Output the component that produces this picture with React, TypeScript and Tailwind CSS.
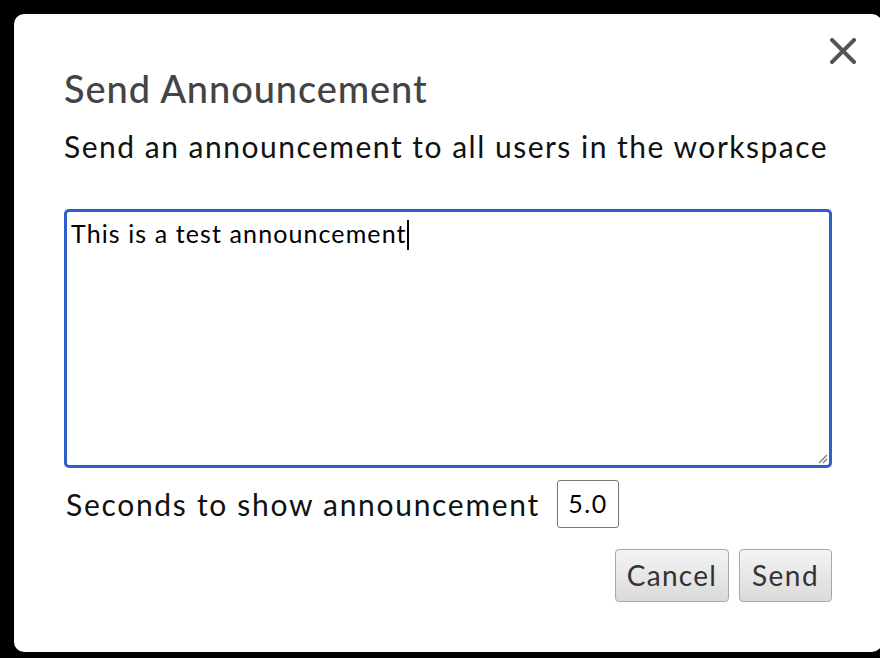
import React from 'react';

const font = { fontFamily: 'Lato, "Noto Sans", sans-serif' };

export default function App() {
  return (
    <div className="w-[880px] h-[658px] bg-black overflow-hidden pl-[14px] pt-[14px]" style={font}>
      <div className="relative w-[868px] h-[638px] bg-white rounded-[10px] pl-[50px] pt-[52px]">
        <button className="absolute left-[816px] top-[24px] w-[26px] h-[26px] text-[#555]" aria-label="Close">
          <svg viewBox="0 0 26 26" className="w-[26px] h-[26px]">
            <path d="M2 2 L24 24 M24 2 L2 24" stroke="currentColor" strokeWidth="4" strokeLinecap="square" />
          </svg>
        </button>

        <h2 className="text-[38px] leading-[1.2] font-medium tracking-[0.9px] text-[#444]">Send Announcement</h2>
        <p className="mt-[16px] text-[30px] leading-[1.2] tracking-[1.5px] text-[#111]">
          Send an announcement to all users in the workspace
        </p>

        <div className="relative mt-[45px] w-[768px] h-[259px] border-[3px] border-[#2c5fc8] rounded-[5px] pl-[4px] pt-[6px] text-[25px] leading-[1.2] tracking-[1.1px] text-black">
          <span>This is a test announcement</span>
          <span className="inline-block w-[2px] h-[30px] bg-black align-[-7px]" />
          <svg viewBox="0 0 12 12" className="absolute right-[1px] bottom-[1px] w-[12px] h-[12px]">
            <path d="M11 3 L3 11 M11 7 L7 11" stroke="#777" strokeWidth="1.2" />
          </svg>
        </div>

        <div className="mt-[12px] flex items-center gap-[17px] w-[768px]">
          <span className="text-[30px] leading-[1.2] tracking-[1.7px] text-[#111] pl-[2px]">Seconds to show announcement</span>
          <div className="w-[62px] h-[48px] border border-[#777] rounded-[3px] flex items-center justify-center text-[25px] tracking-[1.5px] text-black">
            5.0
          </div>
        </div>

        <div className="mt-[21px] w-[768px] flex justify-end gap-[10px]">
          <button className="w-[114px] h-[53px] rounded-[4px] border border-[#a8a8a8] bg-gradient-to-b from-[#f4f4f4] to-[#dadada] text-[28px] tracking-[1.3px] text-[#333]">
            Cancel
          </button>
          <button className="w-[93px] h-[53px] rounded-[4px] border border-[#a8a8a8] bg-gradient-to-b from-[#f4f4f4] to-[#dadada] text-[28px] tracking-[1.5px] text-[#333]">
            Send
          </button>
        </div>
      </div>
    </div>
  );
}
